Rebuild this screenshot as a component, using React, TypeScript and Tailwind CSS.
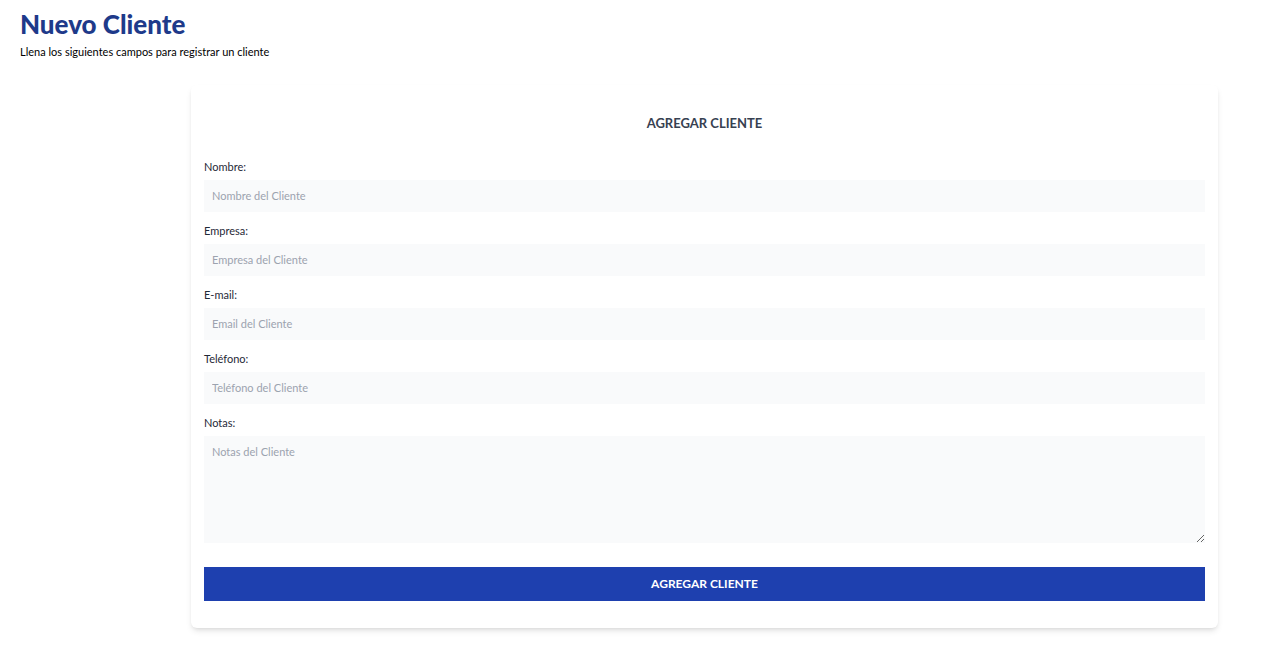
export default function App() {
  const fields = [
    { label: 'Nombre:', placeholder: 'Nombre del Cliente', type: 'text' },
    { label: 'Empresa:', placeholder: 'Empresa del Cliente', type: 'text' },
    { label: 'E-mail:', placeholder: 'Email del Cliente', type: 'email' },
    { label: 'Teléfono:', placeholder: 'Teléfono del Cliente', type: 'tel' },
  ];

  return (
    <div className="min-h-screen bg-white font-['Lato',sans-serif]">
      <div className="px-5 pt-2">
        <h1 className="text-[26px] font-black text-[#1e3a8a] leading-8">Nuevo Cliente</h1>
        <p className="text-[11px] text-black mt-1">Llena los siguientes campos para registrar un cliente</p>
      </div>

      <div className="pl-[191px] pr-[62px] mt-[24px]">
        <form className="bg-white shadow-md rounded-md px-[13px] pt-[28px] pb-[27px]">
          <h2 className="text-center text-[13px] font-bold text-[#374151] leading-5 mb-[26px]">AGREGAR CLIENTE</h2>

          {fields.map(f => (
            <div key={f.label} className="mb-[11px]">
              <label className="block text-[11px] leading-4 text-[#1f2937] mb-[5px]">{f.label}</label>
              <input
                type={f.type}
                placeholder={f.placeholder}
                className="w-full h-8 bg-[#f9fafb] px-2 text-[11px] text-gray-700 placeholder-[#9ca3af] outline-none"
              />
            </div>
          ))}

          <div>
            <label className="block text-[11px] leading-4 text-[#1f2937] mb-[5px]">Notas:</label>
            <textarea
              placeholder="Notas del Cliente"
              className="block w-full h-[107px] bg-[#f9fafb] px-2 py-2 text-[11px] text-gray-700 placeholder-[#9ca3af] outline-none"
            />
          </div>

          <button
            type="submit"
            className="mt-6 w-full h-[34px] bg-[#1e40af] text-white text-xs font-bold uppercase"
          >
            Agregar Cliente
          </button>
        </form>
      </div>
    </div>
  );
}
